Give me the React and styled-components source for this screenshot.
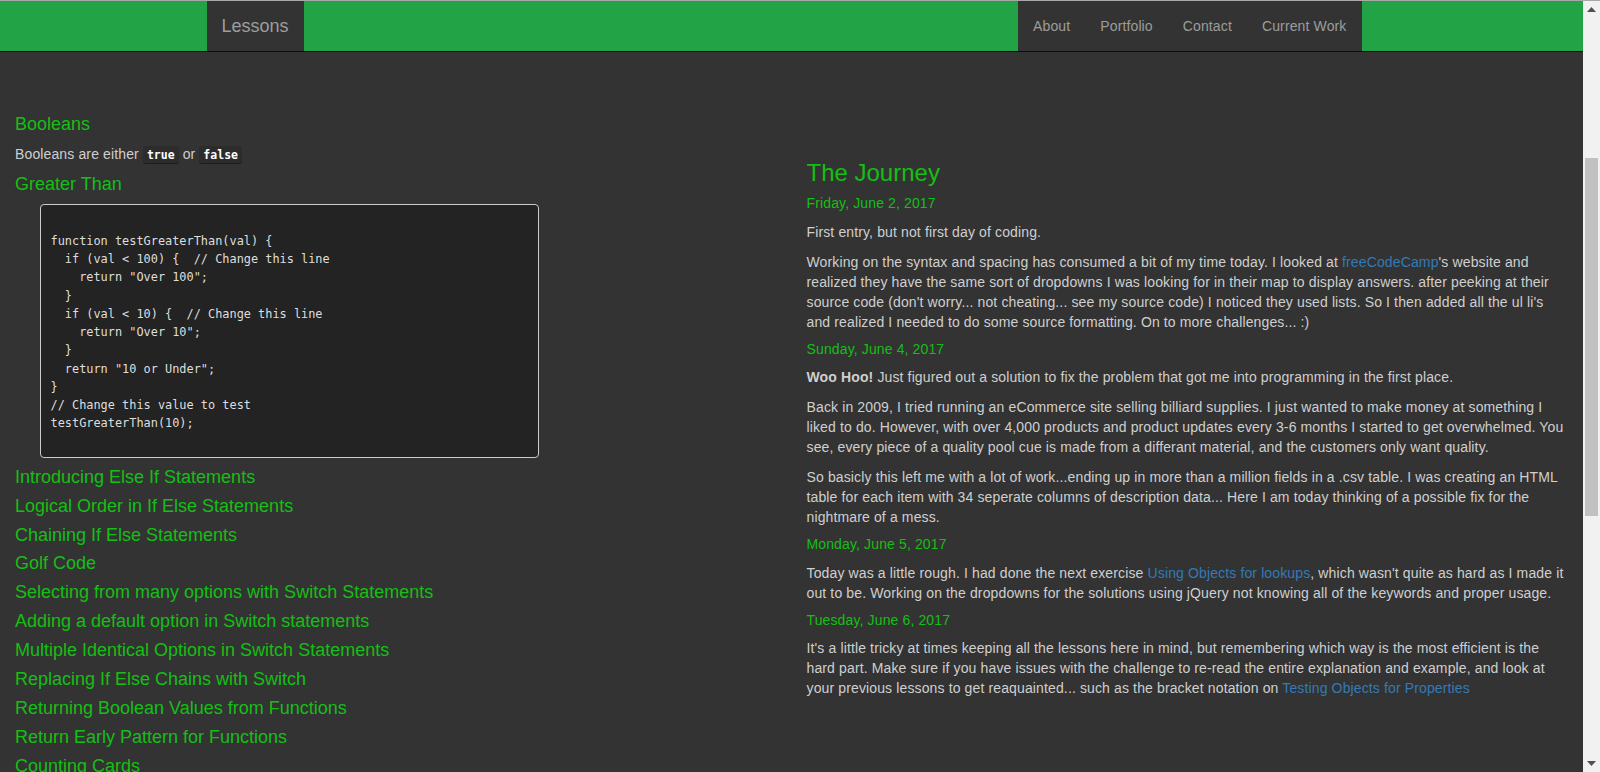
import styled, { createGlobalStyle } from "styled-components";

const GlobalStyle = createGlobalStyle`
  html, body {
    margin: 0;
    padding: 0;
    height: 100%;
    overflow: hidden;
  }
  body {
    background: #333333;
    font-family: "Liberation Sans", Arial, sans-serif;
    font-size: 14px;
    line-height: 20px;
    color: #cfcfcf;
  }
`;

const lessons = [
  "Introducing Else If Statements",
  "Logical Order in If Else Statements",
  "Chaining If Else Statements",
  "Golf Code",
  "Selecting from many options with Switch Statements",
  "Adding a default option in Switch statements",
  "Multiple Identical Options in Switch Statements",
  "Replacing If Else Chains with Switch",
  "Returning Boolean Values from Functions",
  "Return Early Pattern for Functions",
  "Counting Cards",
  "Build JavaScript Objects",
  "Accessing Objects Properties with the Dot Operator",
];

const code = `function testGreaterThan(val) {
  if (val < 100) {  // Change this line
    return "Over 100";
  }
  if (val < 10) {  // Change this line
    return "Over 10";
  }
  return "10 or Under";
}
// Change this value to test
testGreaterThan(10);`;

export default function App() {
  return (
    <Window>
      <GlobalStyle />
      <Page>
        <Navbar>
          <NavContainer>
            <Brand href="#">Lessons</Brand>
            <NavList>
              <NavItem href="#">About</NavItem>
              <NavItem href="#">Portfolio</NavItem>
              <NavItem href="#">Contact</NavItem>
              <NavItem href="#">Current Work</NavItem>
            </NavList>
          </NavContainer>
        </Navbar>
        <Main>
          <LessonsColumn>
            <LessonTitle>Booleans</LessonTitle>
            <Text>
              Booleans are either <Kbd>true</Kbd> or <Kbd>false</Kbd>
            </Text>
            <LessonTitle>Greater Than</LessonTitle>
            <CodeBlock>{code}</CodeBlock>
            {lessons.map((lesson) => (
              <LessonTitle key={lesson}>{lesson}</LessonTitle>
            ))}
          </LessonsColumn>
          <JourneyColumn>
            <JourneyTitle>The Journey</JourneyTitle>
            <EntryDate>Friday, June 2, 2017</EntryDate>
            <Text>First entry, but not first day of coding.</Text>
            <Text>
              Working on the syntax and spacing has consumed a bit of my time
              today. I looked at <Link href="#">freeCodeCamp</Link>'s website
              and realized they have the same sort of dropdowns I was looking
              for in their map to display answers. after peeking at their source
              code (don't worry... not cheating... see my source code) I noticed
              they used lists. So I then added all the ul li's and realized I
              needed to do some source formatting. On to more challenges... :)
            </Text>
            <EntryDate>Sunday, June 4, 2017</EntryDate>
            <Text>
              <strong>Woo Hoo!</strong> Just figured out a solution to fix the
              problem that got me into programming in the first place.
            </Text>
            <Text>
              Back in 2009, I tried running an eCommerce site selling billiard
              supplies. I just wanted to make money at something I liked to do.
              However, with over 4,000 products and product updates every 3-6
              months I started to get overwhelmed. You see, every piece of a
              quality pool cue is made from a differant material, and the
              customers only want quality.
            </Text>
            <Text>
              So basicly this left me with a lot of work...ending up in more
              than a million fields in a .csv table. I was creating an HTML
              table for each item with 34 seperate columns of description
              data... Here I am today thinking of a possible fix for the
              nightmare of a mess.
            </Text>
            <EntryDate>Monday, June 5, 2017</EntryDate>
            <Text>
              Today was a little rough. I had done the next exercise{" "}
              <Link href="#">Using Objects for lookups</Link>, which wasn't
              quite as hard as I made it out to be. Working on the dropdowns for
              the solutions using jQuery not knowing all of the keywords and
              proper usage.
            </Text>
            <EntryDate>Tuesday, June 6, 2017</EntryDate>
            <Text>
              It's a little tricky at times keeping all the lessons here in
              mind, but remembering which way is the most efficient is the hard
              part. Make sure if you have issues with the challenge to re-read
              the entire explanation and example, and look at your previous
              lessons to get reaquainted... such as the bracket notation on{" "}
              <Link href="#">Testing Objects for Properties</Link>
            </Text>
          </JourneyColumn>
        </Main>
      </Page>
      <Scrollbar>
        <ScrollArrow>
          <svg width="9" height="5" viewBox="0 0 9 5">
            <path d="M0 5 L4.5 0 L9 5 Z" fill="#505050" />
          </svg>
        </ScrollArrow>
        <ScrollTrack>
          <ScrollThumb />
        </ScrollTrack>
        <ScrollArrow>
          <svg width="9" height="5" viewBox="0 0 9 5">
            <path d="M0 0 L4.5 5 L9 0 Z" fill="#505050" />
          </svg>
        </ScrollArrow>
      </Scrollbar>
    </Window>
  );
}

const Window = styled.div`
  display: flex;
  height: 100vh;
  box-sizing: border-box;
  border-top: 1px solid #a8a8a8;
  overflow: hidden;
`;

const Page = styled.div`
  flex: 1;
  min-width: 0;
  display: flex;
  flex-direction: column;
  overflow: hidden;
`;

const Navbar = styled.nav`
  flex: none;
  height: 50px;
  background: #22a345;
  border-bottom: 1px solid #0d0d0d;
`;

const NavContainer = styled.div`
  width: 1170px;
  margin: 0 auto;
  padding-right: 15px;
  box-sizing: border-box;
  height: 100%;
  display: flex;
  justify-content: space-between;
`;

const Brand = styled.a`
  display: block;
  background: #333333;
  color: #9d9d9d;
  font-size: 18px;
  line-height: 20px;
  padding: 15px;
  text-decoration: none;
`;

const NavList = styled.div`
  display: flex;
  background: #333333;
`;

const NavItem = styled.a`
  display: block;
  color: #9d9d9d;
  font-size: 14px;
  line-height: 20px;
  letter-spacing: 0.13px;
  padding: 15px;
  text-decoration: none;
`;

const Main = styled.main`
  flex: 1;
  display: flex;
  overflow: hidden;
`;

const LessonsColumn = styled.section`
  width: 50%;
  padding: 63px 15px 0;
  box-sizing: border-box;
`;

const JourneyColumn = styled.section`
  width: 50%;
  padding: 108px 15px 0;
  box-sizing: border-box;
`;

const LessonTitle = styled.h4`
  margin: 0 0 10px;
  font-size: 18px;
  line-height: 18.9px;
  font-weight: 400;
  color: #14bf14;
  white-space: nowrap;
`;

const Text = styled.p`
  margin: 0 0 10px;
  font-size: 14px;
  line-height: 20px;
  letter-spacing: 0.13px;
  color: #cfcfcf;

  strong {
    font-weight: 700;
  }
`;

const Kbd = styled.kbd`
  padding: 2px 4px;
  font-family: "DejaVu Sans Mono", monospace;
  font-size: 11.5px;
  font-weight: 700;
  letter-spacing: 0;
  color: #ffffff;
  background: #2c2c2c;
  border-radius: 3px;
  box-shadow: inset 0 -1px 0 rgba(0, 0, 0, 0.35);
`;

const CodeBlock = styled.pre`
  margin: 0 0 10px 25px;
  width: 499px;
  box-sizing: border-box;
  padding: 27px 9.5px 24px;
  background: #232323;
  border: 1px solid #cccccc;
  border-radius: 4px;
  color: #dedede;
  font-family: "DejaVu Sans Mono", monospace;
  font-size: 11.9px;
  line-height: 18.27px;
  white-space: pre;
`;

const JourneyTitle = styled.h3`
  margin: 0 0 10px;
  font-size: 24px;
  line-height: 26.4px;
  font-weight: 400;
  color: #14bf14;
`;

const EntryDate = styled.h5`
  margin: 10px 0;
  font-size: 14px;
  line-height: 15.4px;
  letter-spacing: 0.13px;
  font-weight: 400;
  color: #14bf14;
`;

const Link = styled.a`
  color: #337ab7;
  text-decoration: none;
`;

const Scrollbar = styled.div`
  flex: none;
  width: 17px;
  background: #f1f1f1;
  display: flex;
  flex-direction: column;
`;

const ScrollArrow = styled.div`
  flex: none;
  height: 17px;
  display: flex;
  align-items: center;
  justify-content: center;
`;

const ScrollTrack = styled.div`
  flex: 1;
  padding-top: 140px;
`;

const ScrollThumb = styled.div`
  margin: 0 2px;
  height: 358px;
  background: #c1c1c1;
`;
